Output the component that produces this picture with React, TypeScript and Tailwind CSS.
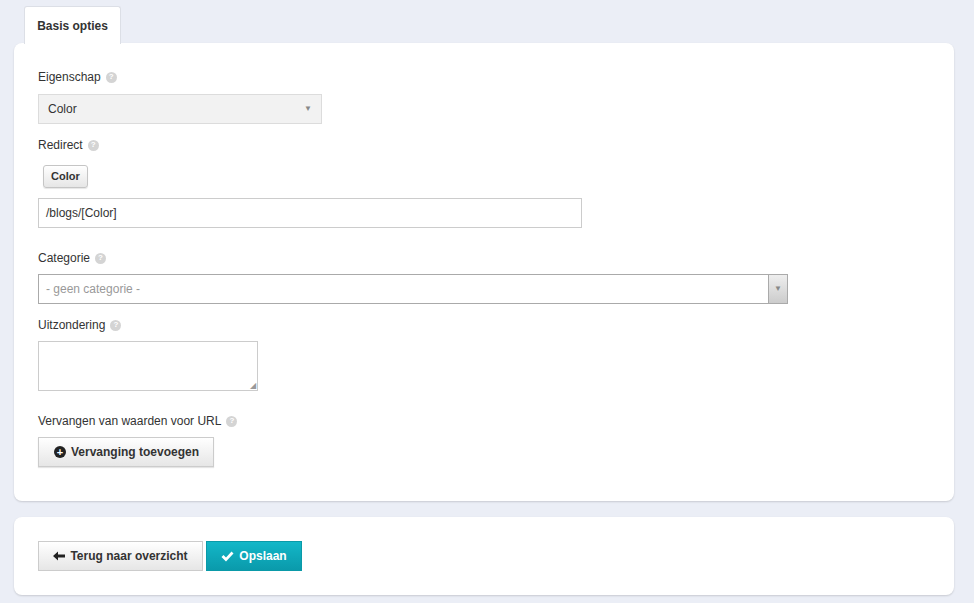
import React from "react";

const Help = () => (
  <span className="inline-flex items-center justify-center w-[11px] h-[11px] rounded-full bg-[#d4d4d4] text-white text-[8px] font-bold ml-[5px] align-middle leading-none">?</span>
);

export default function App() {
  return (
    <div className="w-[974px] h-[603px] bg-[#ebeef6] text-[12px] text-[#333] overflow-hidden" style={{ fontFamily: '"Liberation Sans", Arial, sans-serif' }}>
      <div className="pl-[24px] pt-[6px] flex">
        <div className="h-[38px] w-[97px] bg-white border border-b-0 border-[#dcdfe6] rounded-t-[3px] flex items-center justify-center text-[12px] font-bold text-[#333] -mb-px relative z-10">Basis opties</div>
      </div>
      <div className="mx-[14px] w-[940px] h-[458px] bg-white rounded-[8px] shadow-[0_1px_2px_rgba(0,0,0,0.15)] pl-[24px] pt-[27px]">
        <div className="h-[14px] flex items-center">Eigenschap<Help /></div>
        <div className="mt-[10px] w-[284px] h-[30px] bg-[#f2f2f2] border border-[#dcdcdc] flex items-center justify-between px-[9px]">
          <span>Color</span><span className="text-[#888] text-[8px]">▼</span>
        </div>
        <div className="mt-[14px] h-[14px] flex items-center">Redirect<Help /></div>
        <button className="mt-[13px] ml-[5px] h-[23px] px-[7px] border border-[#c5c5c5] rounded-[3px] bg-gradient-to-b from-white to-[#e6e6e6] text-[11px] font-bold shadow-[0_1px_1px_rgba(0,0,0,0.1)] block">Color</button>
        <div className="mt-[10px] w-[544px] h-[30px] border border-[#ccc] flex items-center px-[7px]">/blogs/[Color]</div>
        <div className="mt-[23px] h-[14px] flex items-center">Categorie<Help /></div>
        <div className="mt-[9px] w-[750px] h-[30px] border border-[#aaa] flex items-center justify-between">
          <span className="pl-[7px] text-[#999]">- geen categorie -</span>
          <span className="w-[19px] h-full border-l border-[#aaa] bg-gradient-to-b from-[#eee] to-[#ccc] flex items-center justify-center text-[#888] text-[8px]">▼</span>
        </div>
        <div className="mt-[14px] h-[14px] flex items-center">Uitzondering<Help /></div>
        <div className="mt-[9px] w-[220px] h-[50px] border border-[#ccc] relative">
          <span className="absolute right-[1px] bottom-0 text-[#999] text-[8px] leading-none">◢</span>
        </div>
        <div className="mt-[23px] h-[14px] flex items-center">Vervangen van waarden voor URL<Help /></div>
        <button className="mt-[9px] w-[176px] h-[30px] border border-[#ccc] bg-gradient-to-b from-white to-[#e6e6e6] font-bold text-[12px] flex items-center pl-[15px] gap-[5px] shadow-[0_1px_1px_rgba(0,0,0,0.1)]">
          <span className="w-[12px] h-[12px] rounded-full bg-[#222] text-white text-[11px] leading-none flex items-center justify-center font-bold">+</span>
          Vervanging toevoegen
        </button>
      </div>
      <div className="mx-[14px] mt-[16px] w-[940px] h-[78px] bg-white rounded-[8px] shadow-[0_1px_2px_rgba(0,0,0,0.15)] pl-[24px] pt-[24px] flex gap-[3px] items-start">
        <button className="w-[165px] h-[30px] border border-[#ccc] bg-gradient-to-b from-white to-[#e6e6e6] font-bold text-[12px] flex items-center justify-center gap-[5px]">
          <svg width="12" height="10" viewBox="0 0 12 10"><path d="M0 5 L5 0.5 V3.5 H12 V6.5 H5 V9.5 Z" fill="#222" /></svg>
          Terug naar overzicht
        </button>
        <button className="w-[96px] h-[30px] border border-[#0a9aa8] bg-gradient-to-b from-[#13b7c8] to-[#0a9aab] text-white font-bold text-[12px] flex items-center justify-center gap-[5px]">
          <svg width="13" height="11" viewBox="0 0 13 11"><path d="M0.5 6 L2.5 4 L5 6.5 L10.5 0.5 L12.5 2.5 L5 10.5 Z" fill="#fff" /></svg>
          Opslaan
        </button>
      </div>
    </div>
  );
}
